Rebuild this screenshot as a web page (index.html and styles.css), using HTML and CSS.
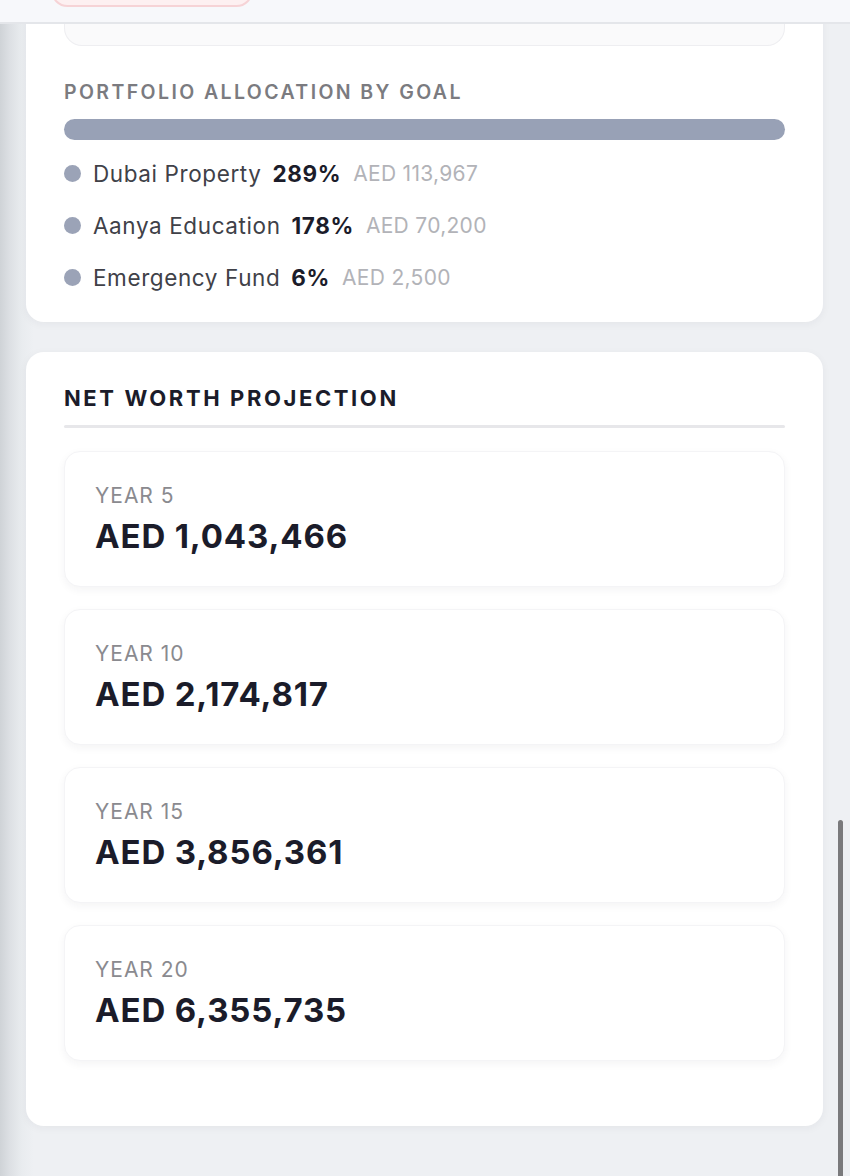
FILE: index.html
```html
<!DOCTYPE html>
<html lang="en">
<head>
<meta charset="utf-8">
<title>Net Worth</title>
<link rel="stylesheet" href="styles.css">
</head>
<body>
<div class="viewport">
  <header class="topbar">
    <div class="pill"></div>
  </header>

  <main class="page">
    <section class="card card-alloc">
      <div class="nested-box"></div>
      <h3 class="section-label">Portfolio Allocation by Goal</h3>
      <div class="alloc-bar"></div>
      <ul class="legend">
        <li class="legend-row"><span class="dot"></span><span class="goal">Dubai Property</span><span class="pct">289%</span><span class="amt">AED 113,967</span></li>
        <li class="legend-row"><span class="dot"></span><span class="goal">Aanya Education</span><span class="pct">178%</span><span class="amt">AED 70,200</span></li>
        <li class="legend-row"><span class="dot"></span><span class="goal">Emergency Fund</span><span class="pct">6%</span><span class="amt">AED 2,500</span></li>
      </ul>
    </section>

    <section class="card card-proj">
      <h2 class="section-title">Net Worth Projection</h2>
      <div class="divider"></div>
      <div class="year-list">
        <div class="year-card"><div class="year-label">Year 5</div><div class="year-value">AED 1,043,466</div></div>
        <div class="year-card"><div class="year-label">Year 10</div><div class="year-value">AED 2,174,817</div></div>
        <div class="year-card"><div class="year-label">Year 15</div><div class="year-value">AED 3,856,361</div></div>
        <div class="year-card"><div class="year-label">Year 20</div><div class="year-value">AED 6,355,735</div></div>
      </div>
    </section>
  </main>

  <div class="scrollbar"></div>
</div>
</body>
</html>
```

FILE: styles.css
```css
* { box-sizing: border-box; }

html, body {
  margin: 0;
  padding: 0;
  background: #ffffff;
}

body {
  font-family: Inter, "Noto Sans", "Liberation Sans", sans-serif;
  color: #1b1c2a;
  overflow: hidden;
}

.viewport {
  position: relative;
  width: 850px;
  height: 1176px;
  overflow: hidden;
  background: linear-gradient(to right, #cfd3d7 0px, #dde0e4 10px, #e9ecef 22px, #eef0f3 34px, #eef0f3 100%);
}

.topbar {
  position: absolute;
  top: 0;
  left: 0;
  width: 850px;
  height: 24px;
  background: #f7f8fb;
  border-bottom: 2px solid #e4e6ea;
  z-index: 5;
}

.pill {
  position: absolute;
  left: 51px;
  top: -26px;
  width: 202px;
  height: 33px;
  border-radius: 17px;
  background: #fdf0f1;
  border: 2px solid #f6d3d6;
}

.page {
  display: flex;
  flex-direction: column;
  gap: 30px;
  padding: 0 27px 0 26px;
  margin-top: -40px;
}

.card {
  background: #ffffff;
  border-radius: 18px;
  box-shadow: 0 2px 8px rgba(30, 40, 60, 0.05);
}

.card-alloc {
  padding: 0 38px 30px;
}

.nested-box {
  height: 86px;
  background: #fafafb;
  border: 1px solid #eeeef1;
  border-top: none;
  border-radius: 0 0 18px 18px;
}

.section-label {
  margin: 34px 0 0;
  font-size: 19.5px;
  line-height: 24px;
  font-weight: 600;
  letter-spacing: 2.4px;
  text-transform: uppercase;
  color: #7b7b80;
}

.alloc-bar {
  margin-top: 15px;
  height: 21px;
  border-radius: 11px;
  background: #98a1b6;
}

.legend {
  list-style: none;
  margin: 18px 0 0;
  padding: 0;
  display: flex;
  flex-direction: column;
  gap: 22px;
}

.legend-row {
  display: flex;
  align-items: center;
  height: 30px;
  font-size: 22.5px;
  letter-spacing: 0.6px;
}

.dot {
  width: 17px;
  height: 17px;
  border-radius: 50%;
  background: #9ba3b7;
  margin-right: 12px;
  flex: none;
}

.goal {
  color: #404148;
  font-weight: 400;
}

.pct {
  margin-left: 11px;
  font-weight: 700;
  color: #1b1c2a;
}

.amt {
  margin-left: 12px;
  color: #b2b3b8;
  font-size: 21px;
  letter-spacing: 0.3px;
}

.card-proj {
  padding: 33px 38px 65px;
}

.section-title {
  margin: 0;
  font-size: 22px;
  line-height: 26px;
  font-weight: 700;
  letter-spacing: 2.6px;
  text-transform: uppercase;
  color: #1b1c2a;
}

.divider {
  margin-top: 14px;
  height: 3px;
  background: #e7e7ea;
  border-radius: 2px;
}

.year-list {
  margin-top: 23px;
  display: flex;
  flex-direction: column;
  gap: 22px;
}

.year-card {
  height: 136px;
  padding: 32px 30px 0;
  border-radius: 16px;
  background: #ffffff;
  border: 1px solid #f4f4f6;
  box-shadow: 0 3px 8px rgba(30, 40, 60, 0.05);
}

.year-label {
  font-size: 21px;
  line-height: 24px;
  letter-spacing: 1px;
  text-transform: uppercase;
  color: #8a8a8f;
}

.year-value {
  margin-top: 8px;
  font-size: 33px;
  line-height: 40px;
  font-weight: 700;
  letter-spacing: 0.85px;
  color: #1b1c2a;
}

.scrollbar {
  position: absolute;
  left: 838px;
  top: 820px;
  width: 5px;
  height: 400px;
  border-radius: 3px;
  background: #7a7a7c;
}
```
